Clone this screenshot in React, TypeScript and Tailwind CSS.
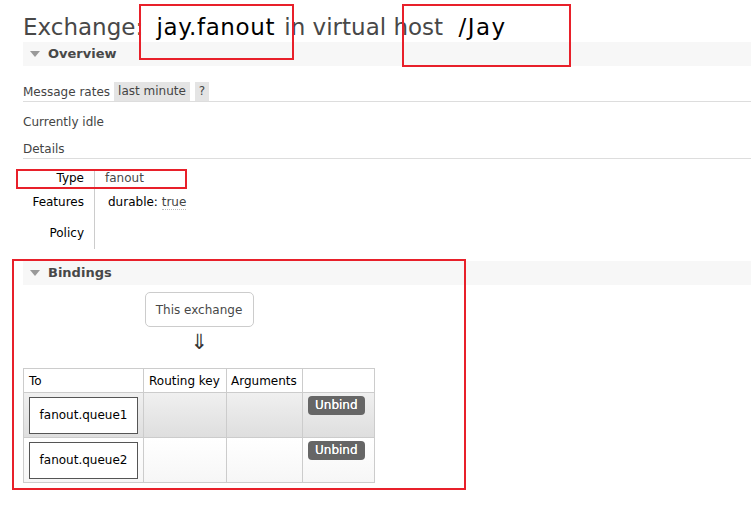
import React from "react";

const Triangle = () => (
  <svg width="10" height="6" viewBox="0 0 10 6" className="mr-[8px]">
    <path d="M0 0 L10 0 L5 6 Z" fill="#999" />
  </svg>
);

const SectionBar = ({ title }: { title: string }) => (
  <div className="flex items-center h-[24px] bg-[#f7f7f7] pl-[7px]">
    <Triangle />
    <span className="text-[13px] font-bold text-[#484848]">{title}</span>
  </div>
);

const bindings = ["fanout.queue1", "fanout.queue2"];

export default function App() {
  return (
    <div className="relative w-[751px] h-[506px] overflow-hidden bg-white font-['DejaVu_Sans',Verdana,sans-serif] text-[12px] text-[#444]">
      <div className="pl-[23px]">
        <h1 className="mt-[13px] h-[28px] leading-[28px] text-[23px] whitespace-nowrap text-[#484848]">
          Exchange:{" "}
          <span className="ml-[6px] mr-[2px] tracking-[0.6px] text-black">jay.fanout</span> in virtual host{" "}
          <span className="ml-[8px] tracking-[1.5px] text-black">/Jay</span>
        </h1>

        <div className="mt-[1px]">
          <SectionBar title="Overview" />
        </div>

        <div className="mt-[16px] flex items-center h-[20px] border-b border-[#ddd]">
          <span className="mr-[4px]">Message rates</span>
          <span className="bg-[#e4e4e4] h-[19px] leading-[19px] px-[4px] mr-[5px]">last minute</span>
          <span className="bg-[#e4e4e4] h-[19px] leading-[19px] px-[4px]">?</span>
        </div>

        <div className="mt-[12px] h-[16px] leading-[16px]">Currently idle</div>
        <div className="mt-[11px] h-[18px] leading-[16px] border-b border-[#ddd]">Details</div>

        <div className="mt-[10px] flex">
          <div className="w-[71px] flex flex-col items-end text-black pr-[10px]">
            <div className="h-[18px] leading-[18px]">Type</div>
            <div className="h-[30px] leading-[30px]">Features</div>
            <div className="h-[32px] leading-[32px]">Policy</div>
          </div>
          <div className="border-l border-[#ccc] h-[80px] pl-[10px]">
            <div className="h-[18px] leading-[18px] text-[#484848]">fanout</div>
            <div className="h-[30px] leading-[30px] pl-[3px] text-black">
              durable:{" "}
              <span className="text-[#444] border-b border-dotted border-[#bbb]">true</span>
            </div>
          </div>
        </div>

        <div className="mt-[12px]">
          <SectionBar title="Bindings" />
        </div>

        <div className="mt-[7px] flex flex-col items-center w-[352px]">
          <div className="w-[109px] h-[35px] border border-[#ccc] rounded-[5px] flex items-center justify-center text-[12px] text-[#484848]">
            This exchange
          </div>
          <div className="h-[30px] leading-[30px] text-[21px] text-[#333]">⇓</div>
        </div>

        <table className="mt-[11px] table-fixed w-[351px] border-collapse border border-[#ccc] text-black">
          <colgroup>
            <col className="w-[120px]" />
            <col className="w-[83px]" />
            <col className="w-[76px]" />
            <col className="w-[72px]" />
          </colgroup>
          <thead>
            <tr className="h-[24px]">
              <th className="border border-[#ccc] text-left font-normal px-[5px]">To</th>
              <th className="border border-[#ccc] text-left font-normal px-[5px] whitespace-nowrap">Routing key</th>
              <th className="border border-[#ccc] text-left font-normal px-[4px]">Arguments</th>
              <th className="border border-[#ccc] text-left font-normal px-[5px]"></th>
            </tr>
          </thead>
          <tbody>
            {bindings.map((q, i) => (
              <tr
                key={q}
                className={
                  i === 0
                    ? "h-[45px] bg-gradient-to-b from-[#f0f0f0] to-[#dedede]"
                    : "h-[45px] bg-gradient-to-b from-white to-[#f6f6f6]"
                }
              >
                <td className="border border-[#ccc] px-[5px] py-[2px]">
                  <div className="w-[109px] h-[37px] border border-[#555] bg-white flex items-center justify-center">
                    {q}
                  </div>
                </td>
                <td className="border border-[#ccc]"></td>
                <td className="border border-[#ccc]"></td>
                <td className="border border-[#ccc] align-top px-[5px] pt-[3px]">
                  <span className="inline-block bg-[#666] text-white h-[19px] leading-[19px] px-[7px] rounded-[4px] [text-shadow:0_0_0.4px_white]">
                    Unbind
                  </span>
                </td>
              </tr>
            ))}
          </tbody>
        </table>
      </div>

      {/* red annotation boxes */}
      <div className="absolute left-[139px] top-[4px] w-[155px] h-[56px] border-2 border-[#e8202a]" />
      <div className="absolute left-[402px] top-[4px] w-[169px] h-[63px] border-2 border-[#e8202a]" />
      <div className="absolute left-[16px] top-[169px] w-[171px] h-[20px] border-2 border-[#e8202a]" />
      <div className="absolute left-[12px] top-[259px] w-[454px] h-[231px] border-2 border-[#e8202a]" />
    </div>
  );
}
